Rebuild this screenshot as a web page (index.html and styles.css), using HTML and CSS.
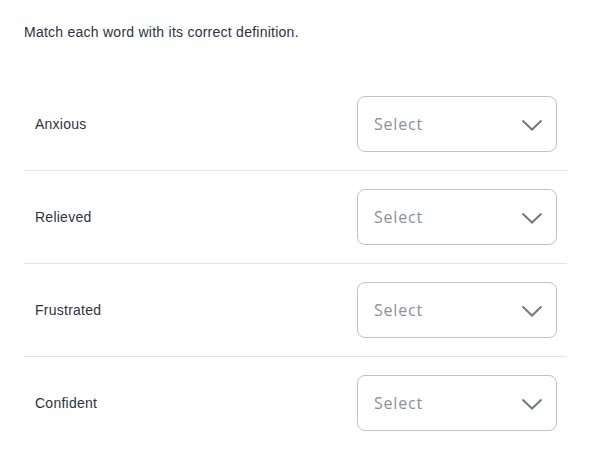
FILE: index.html
```html
<!DOCTYPE html>
<html lang="en">

<head>
    <meta charset="UTF-8">
    <meta name="viewport" content="width=device-width, initial-scale=1.0">
    <title>Match the words</title>
    <link rel="stylesheet" href="styles.css">
</head>

<body>
    <div class="quiz">
        <p class="prompt">Match each word with its correct definition.</p>

        <div class="match-list">
            <div class="match-row">
                <span class="word">Anxious</span>
                <div class="select-box">
                    <span class="select-text">Select</span>
                    <svg class="chevron" width="22" height="12" viewBox="0 0 22 12"><path d="M1.5 1.5 L11 10.5 L20.5 1.5" /></svg>
                </div>
            </div>
            <div class="match-row">
                <span class="word">Relieved</span>
                <div class="select-box">
                    <span class="select-text">Select</span>
                    <svg class="chevron" width="22" height="12" viewBox="0 0 22 12"><path d="M1.5 1.5 L11 10.5 L20.5 1.5" /></svg>
                </div>
            </div>
            <div class="match-row">
                <span class="word">Frustrated</span>
                <div class="select-box">
                    <span class="select-text">Select</span>
                    <svg class="chevron" width="22" height="12" viewBox="0 0 22 12"><path d="M1.5 1.5 L11 10.5 L20.5 1.5" /></svg>
                </div>
            </div>
            <div class="match-row">
                <span class="word">Confident</span>
                <div class="select-box">
                    <span class="select-text">Select</span>
                    <svg class="chevron" width="22" height="12" viewBox="0 0 22 12"><path d="M1.5 1.5 L11 10.5 L20.5 1.5" /></svg>
                </div>
            </div>
        </div>
    </div>
</body>

</html>
```

FILE: styles.css
```css
body {
    margin: 0;
    padding: 0;
    background-color: #ffffff;
    font-family: "Liberation Sans", Arial, sans-serif;
    color: #2d3340;
}

.quiz {
    padding: 24px 28px 0 24px;
}

.prompt {
    margin: 0 0 38px 0;
    font-size: 14px;
    line-height: 16px;
    letter-spacing: 0.25px;
}

.match-row {
    display: flex;
    align-items: center;
    justify-content: space-between;
    padding: 18px 10px 18px 11px;
    border-bottom: 1px solid #e4e4e6;
}

.match-row:last-child {
    border-bottom: none;
}

.word {
    font-size: 14px;
    letter-spacing: 0.25px;
}

.select-box {
    box-sizing: border-box;
    width: 200px;
    height: 56px;
    display: flex;
    align-items: center;
    justify-content: space-between;
    padding: 0 13px 0 16px;
    border: 1px solid #c2c3c7;
    border-radius: 8px;
}

.select-text {
    font-family: "Open Sans", sans-serif;
    font-size: 16px;
    color: #8b9099;
    letter-spacing: 0.8px;
}

.chevron {
    margin-top: 2px;
}

.chevron path {
    fill: none;
    stroke: #737983;
    stroke-width: 2;
}
```
